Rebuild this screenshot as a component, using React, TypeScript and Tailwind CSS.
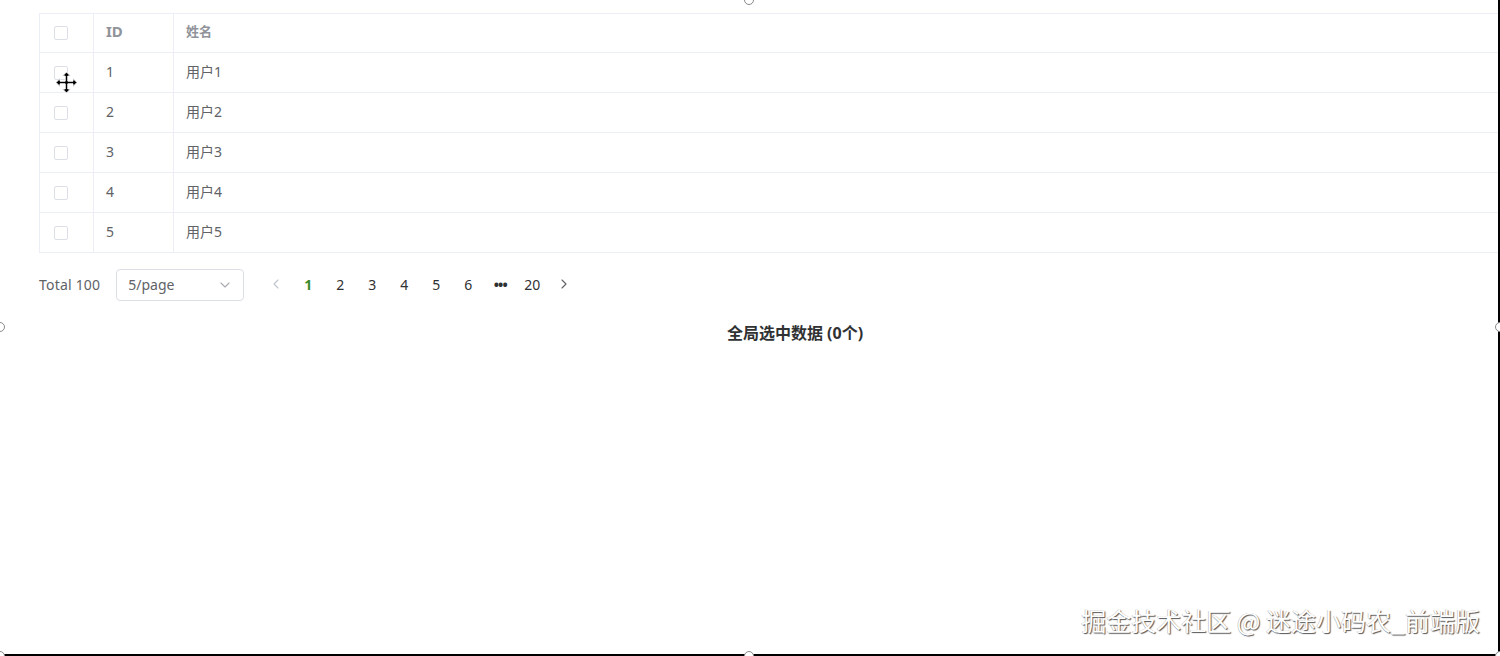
import React from "react";

const rows = [1, 2, 3, 4, 5];

function Checkbox() {
  return <span className="block w-[14px] h-[14px] rounded-[2px] border border-[#dcdfe6] bg-white" />;
}

function Chevron({ dir, color }: { dir: "left" | "right" | "down"; color: string }) {
  const d = dir === "left" ? "M8 2 L4 6 L8 10" : dir === "right" ? "M4 2 L8 6 L4 10" : "M2 4 L6 8 L10 4";
  return (
    <svg width="12" height="12" viewBox="0 0 12 12" fill="none">
      <path d={d} stroke={color} strokeWidth="1.1" strokeLinecap="round" strokeLinejoin="round" />
    </svg>
  );
}

function Handle({ className }: { className: string }) {
  return <span className={`absolute w-[10px] h-[10px] rounded-full border border-[#8a8a8a] bg-white ${className}`} />;
}

export default function App() {
  const font = { fontFamily: '"Noto Sans", "Noto Sans CJK SC", sans-serif' };
  return (
    <div className="relative w-[1500px] h-[656px] overflow-hidden bg-white" style={font}>
      <div className="pt-[13px] pl-[39px] w-[1551px]">
        <div className="border-l border-t border-[#ebeef5]">
          <div className="flex h-[39px] border-b border-[#ebeef5] bg-white text-[#909399]">
            <div className="w-[54px] flex items-center pl-[14px] border-r border-[#ebeef5]"><Checkbox /></div>
            <div className="w-[80px] flex items-center pl-[12px] pb-[4px] border-r border-[#ebeef5] text-[15px] font-bold">ID</div>
            <div className="flex-1 flex items-center pl-[12px] pb-[3px] text-[13px] font-bold">姓名</div>
          </div>
          {rows.map((r) => (
            <div key={r} className="flex h-[40px] border-b border-[#ebeef5] text-[14px] text-[#606266]">
              <div className="w-[54px] flex items-center pl-[14px] border-r border-[#ebeef5]"><Checkbox /></div>
              <div className="w-[80px] flex items-center pl-[12px] pb-[2px] border-r border-[#ebeef5]">{r}</div>
              <div className="flex-1 flex items-center pl-[12px] pb-[2px]">用户{r}</div>
            </div>
          ))}
        </div>
        <div className="flex items-center h-[32px] mt-[16px] text-[14px] text-[#606266]">
          <span className="pb-[2px] tracking-[0.2px]">Total 100</span>
          <div className="ml-[16px] w-[128px] h-[32px] rounded-[4px] border border-[#dcdfe6] flex items-center justify-between pl-[11px] pr-[12px]">
            <span className="pb-[2px]">5/page</span>
            <Chevron dir="down" color="#a8abb2" />
          </div>
          <div className="ml-[16px] flex items-center pb-[2px]">
            <div className="w-[32px] h-[32px] flex items-center justify-center"><Chevron dir="left" color="#c0c4cc" /></div>
            {["1", "2", "3", "4", "5", "6"].map((p) => (
              <div key={p} className={`w-[32px] h-[32px] flex items-center justify-center ${p === "1" ? "text-[#3a8a2a] font-bold" : "text-[#303133]"}`}>{p}</div>
            ))}
            <div className="w-[32px] h-[32px] flex items-center justify-center text-[#303133] font-bold tracking-[-1px]">•••</div>
            <div className="w-[32px] h-[32px] flex items-center justify-center text-[#303133]">20</div>
            <div className="w-[32px] h-[32px] flex items-center justify-center"><Chevron dir="right" color="#606266" /></div>
          </div>
        </div>
        <div className="mt-[20px] text-center text-[16px] font-bold text-[#303133]">全局选中数据 (0个)</div>
      </div>

      <div
        className="absolute right-[20px] bottom-[17px] text-[25px] text-white"
        style={{ fontFamily: '"Noto Sans CJK SC", sans-serif', textShadow: "1px 1px 1px #555, -0.5px -0.5px 0 #bbb" }}
      >
        掘金技术社区 @ 迷途小码农_前端版
      </div>

      <div className="absolute right-0 top-0 w-[2px] h-full bg-black" />
      <div className="absolute left-0 bottom-0 w-full h-[2px] bg-black" />
      <Handle className="left-[744px] top-[-5px]" />
      <Handle className="left-[-5px] top-[322px]" />
      <Handle className="right-[-5px] top-[322px]" />
      <Handle className="left-[744px] bottom-[-5px]" />
      <Handle className="left-[-5px] bottom-[-5px]" />
      <Handle className="right-[-5px] bottom-[-5px]" />

      <svg className="absolute left-[55px] top-[71px]" width="23" height="23" viewBox="0 0 23 23">
        <path
          d="M11.5 1 L15.5 5 L12.8 5 L12.8 10.2 L18 10.2 L18 7.5 L22 11.5 L18 15.5 L18 12.8 L12.8 12.8 L12.8 18 L15.5 18 L11.5 22 L7.5 18 L10.2 18 L10.2 12.8 L5 12.8 L5 15.5 L1 11.5 L5 7.5 L5 10.2 L10.2 10.2 L10.2 5 L7.5 5 Z"
          fill="black"
          stroke="white"
          strokeWidth="1"
          strokeLinejoin="round"
        />
      </svg>
    </div>
  );
}
